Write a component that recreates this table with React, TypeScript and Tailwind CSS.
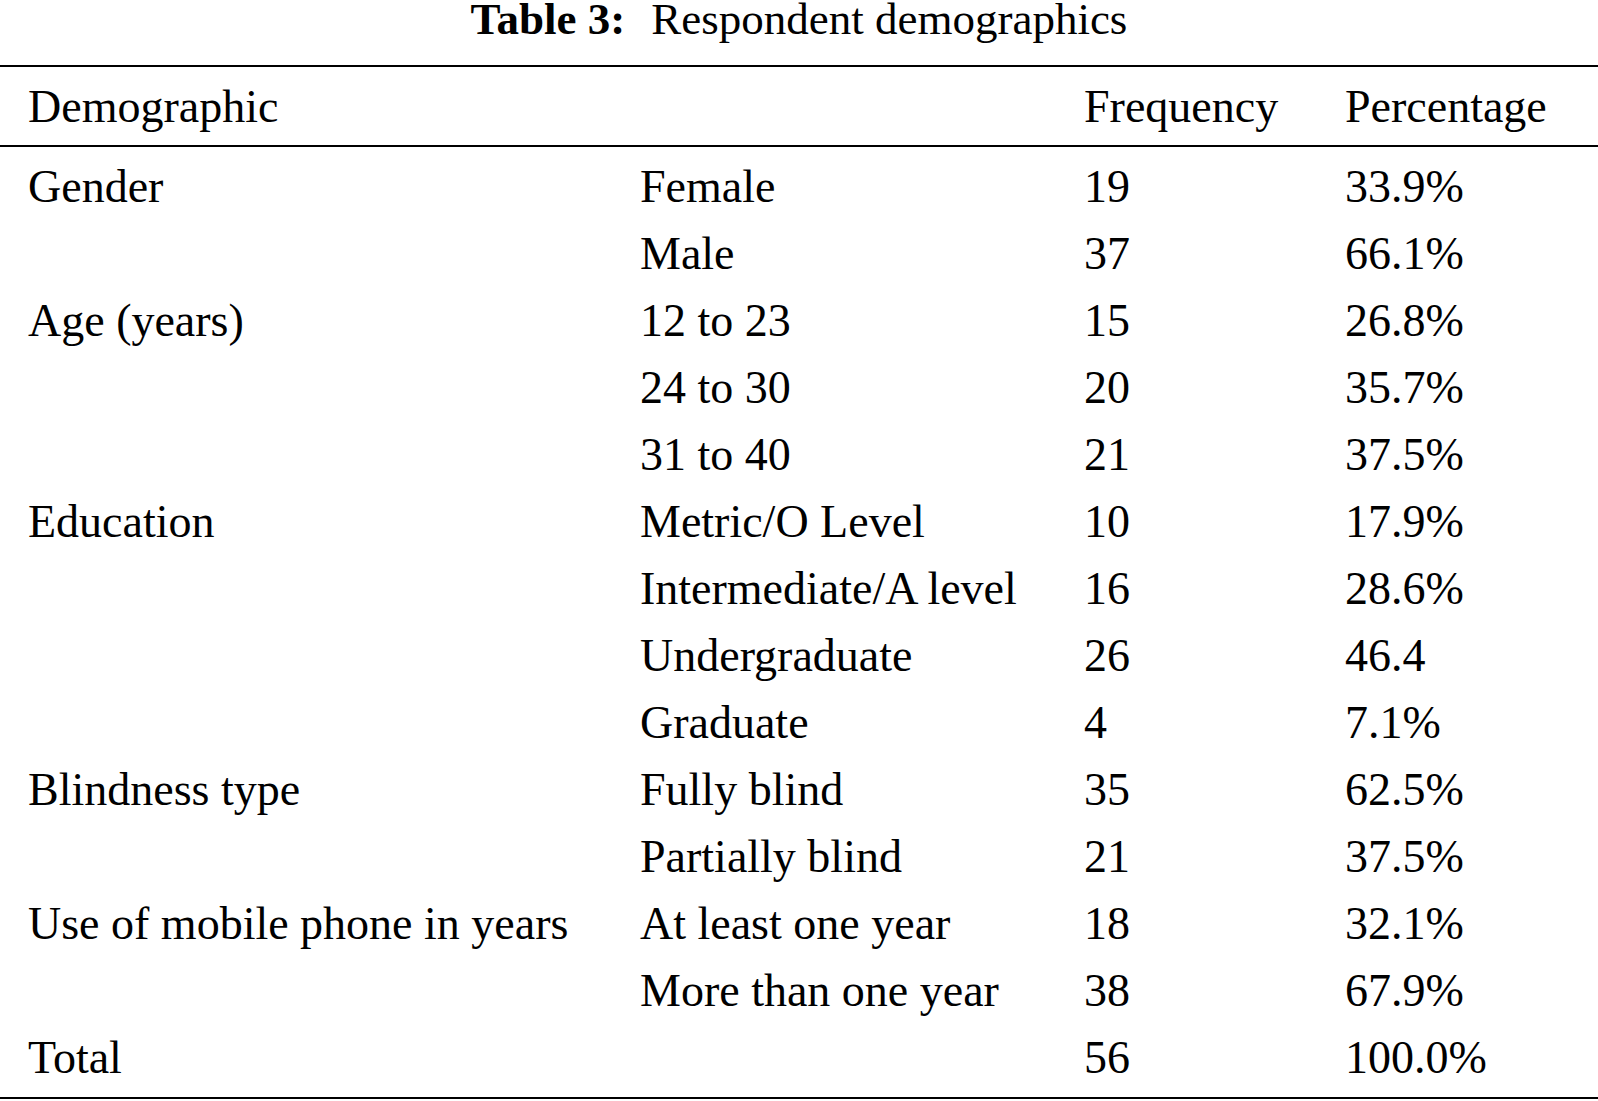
const rows: [string, string, string, string][] = [
  ["Gender", "Female", "19", "33.9%"],
  ["", "Male", "37", "66.1%"],
  ["Age (years)", "12 to 23", "15", "26.8%"],
  ["", "24 to 30", "20", "35.7%"],
  ["", "31 to 40", "21", "37.5%"],
  ["Education", "Metric/O Level", "10", "17.9%"],
  ["", "Intermediate/A level", "16", "28.6%"],
  ["", "Undergraduate", "26", "46.4"],
  ["", "Graduate", "4", "7.1%"],
  ["Blindness type", "Fully blind", "35", "62.5%"],
  ["", "Partially blind", "21", "37.5%"],
  ["Use of mobile phone in years", "At least one year", "18", "32.1%"],
  ["", "More than one year", "38", "67.9%"],
  ["Total", "", "56", "100.0%"],
];

function Row({ cells }: { cells: [string, string, string, string] }) {
  return (
    <div className="grid grid-cols-[612px_444px_261px_1fr] pl-[28px] h-[67px] leading-[67px] whitespace-nowrap">
      {cells.map((c, i) => (
        <div key={i}>{c}</div>
      ))}
    </div>
  );
}

export default function App() {
  return (
    <div className="w-[1598px] h-[1101px] bg-white text-black font-['Liberation_Serif','Times_New_Roman',serif] text-[46px] overflow-hidden">
      {/* caption */}
      <div className="h-[65px] pt-[2px] flex justify-center text-[45px] leading-[34px]">
        <span className="font-bold">Table 3:</span>
        <span className="ml-[26px]">Respondent demographics</span>
      </div>
      <div className="h-[2px] bg-black" />

      {/* header */}
      <div className="pt-[6px] pb-[5px]">
        <Row cells={["Demographic", "", "Frequency", "Percentage"]} />
      </div>
      <div className="h-[2px] bg-black" />

      {/* body */}
      <div className="pt-[6px] pb-[6px]">
        {rows.map((r, i) => (
          <Row key={i} cells={r} />
        ))}
      </div>
      <div className="h-[2px] bg-black" />
    </div>
  );
}
